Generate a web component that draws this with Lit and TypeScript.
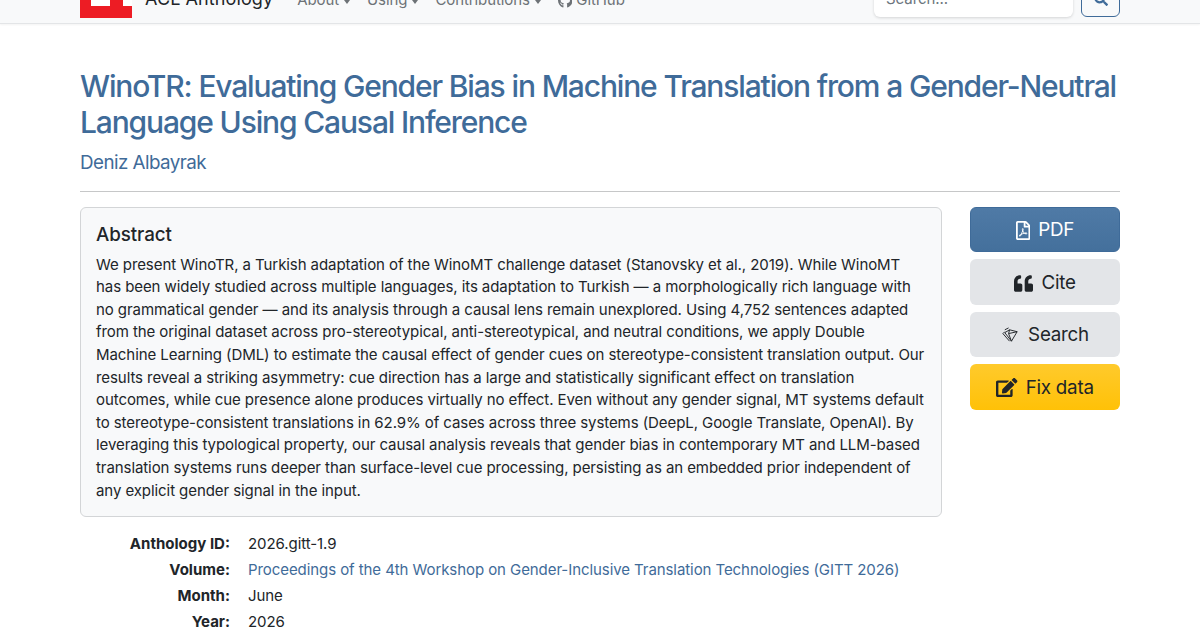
import { LitElement, html, css } from "lit";
import { customElement } from "lit/decorators.js";

const ic = (vb: string, d: string, cls = "") => html`<svg class="ic ${cls}" viewBox="${vb}" fill="currentColor"><path d="${d}"></path></svg>`;
const caret = html`<span class="caret"></span>`;
const GH = "M165.9 397.4c0 2-2.3 3.6-5.2 3.6-3.3.3-5.6-1.3-5.6-3.6 0-2 2.3-3.6 5.2-3.6 3-.3 5.6 1.3 5.6 3.6zm-31.1-4.5c-.7 2 1.3 4.3 4.3 4.9 2.6 1 5.6 0 6.2-2s-1.3-4.3-4.3-5.2c-2.6-.7-5.5.3-6.2 2.3zm44.2-1.7c-2.9.7-4.9 2.6-4.6 4.9.3 2 2.9 3.3 5.9 2.6 2.9-.7 4.9-2.6 4.6-4.6-.3-1.9-3-3.2-5.9-2.9zM244.8 8C106.1 8 0 113.3 0 252c0 110.9 69.8 205.8 169.5 239.2 12.8 2.3 17.3-5.6 17.3-12.1 0-6.2-.3-40.4-.3-61.4 0 0-70 15-84.7-29.8 0 0-11.4-29.1-27.8-36.6 0 0-22.9-15.7 1.6-15.4 0 0 24.9 2 38.6 25.8 21.9 38.6 58.6 27.5 72.9 20.9 2.3-16 8.8-27.1 16-33.7-55.9-6.2-112.3-14.3-112.3-110.5 0-27.5 7.6-41.3 23.6-58.9-2.6-6.5-11.1-33.3 2.6-67.9 20.9-6.5 69 27 69 27 20-5.6 41.5-8.5 62.8-8.5s42.8 2.9 62.8 8.5c0 0 48.1-33.6 69-27 13.7 34.7 5.2 61.4 2.6 67.9 16 17.7 25.8 31.5 25.8 58.9 0 96.5-58.9 104.2-114.8 110.5 9.2 7.9 17 22.9 17 46.4 0 33.7-.3 75.4-.3 83.6 0 6.5 4.6 14.4 17.3 12.1C428.2 457.8 496 362.9 496 252 496 113.3 383.5 8 244.8 8z";
const SEARCH = "M505 442.7L405.3 343c-4.5-4.5-10.6-7-17-7H372c27.6-35.3 44-79.7 44-128C416 93.1 322.9 0 208 0S0 93.1 0 208s93.1 208 208 208c48.3 0 92.7-16.4 128-44v16.3c0 6.4 2.5 12.5 7 17l99.7 99.7c9.4 9.4 24.6 9.4 33.9 0l28.3-28.3c9.4-9.4 9.4-24.6.1-34zM208 336c-70.7 0-128-57.2-128-128 0-70.7 57.2-128 128-128 70.7 0 128 57.2 128 128 0 70.7-57.2 128-128 128z";
const QUOTE = "M464 256h-80v-64c0-35.3 28.7-64 64-64h8c13.3 0 24-10.7 24-24V56c0-13.3-10.7-24-24-24h-8c-88.4 0-160 71.6-160 160v240c0 26.5 21.5 48 48 48h128c26.5 0 48-21.5 48-48V304c0-26.5-21.5-48-48-48zm-288 0H96v-64c0-35.3 28.7-64 64-64h8c13.3 0 24-10.7 24-24V56c0-13.3-10.7-24-24-24h-8C71.6 32 0 103.6 0 192v240c0 26.5 21.5 48 48 48h128c26.5 0 48-21.5 48-48V304c0-26.5-21.5-48-48-48z";
const EDIT = "M402.6 83.2l90.2 90.2c3.8 3.8 3.8 10 0 13.8L274.4 405.6l-92.8 10.3c-12.4 1.4-22.9-9.1-21.5-21.5l10.3-92.8L388.8 83.2c3.8-3.8 10-3.8 13.8 0zm162-22.9l-48.8-48.8c-15.2-15.2-39.9-15.2-55.2 0l-35.4 35.4c-3.8 3.8-3.8 10 0 13.8l90.2 90.2c3.8 3.8 10 3.8 13.8 0l35.4-35.4c15.2-15.3 15.2-40 0-55.2zM384 346.2V448H64V128h229.8c3.2 0 6.2-1.3 8.5-3.5l40-40c7.6-7.6 2.2-20.5-8.5-20.5H48C21.5 64 0 85.5 0 112v352c0 26.5 21.5 48 48 48h352c26.5 0 48-21.5 48-48V306.2c0-10.7-12.9-16-20.5-8.5l-40 40c-2.2 2.3-3.5 5.3-3.5 8.5z";
const PDF = "M369.9 97.9L286 14C277 5 264.8-.1 252.1-.1H48C21.5 0 0 21.5 0 48v416c0 26.5 21.5 48 48 48h288c26.5 0 48-21.5 48-48V131.9c0-12.7-5.1-25-14.1-34zM332.1 128H256V51.9l76.1 76.1zM48 464V48h160v104c0 13.3 10.7 24 24 24h104v288H48zm250.2-143.7c-12.2-12-47-8.7-64.4-6.5-17.2-10.5-28.7-25-36.8-46.3 3.9-16.1 10.1-40.6 5.4-56-4.2-26.2-37.8-23.6-42.6-5.9-4.4 16.1-.4 38.5 7 67.1-10 23.9-24.9 56-35.4 74.4-20 10.3-47 26.2-51 46.2-3.3 15.8 26 55.2 76.1-31.2 22.4-7.4 46.8-16.5 68.4-20.1 18.9 10.2 41 17 55.8 17 25.5 0 28-28.2 17.5-38.7zm-198.1 77.8c5.1-13.7 24.5-29.5 30.4-35-19 30.3-30.4 35.7-30.4 35zm81.6-190.6c7.4 0 6.7 32.1 1.8 40.8-4.4-13.9-4.3-40.8-1.8-40.8zm-24.4 136.6c9.7-16.9 18-37 24.7-54.7 8.3 15.1 18.9 27.2 30.1 35.5-20.8 4.3-38.9 13.1-54.8 19.2zm131.6-5s-5 6-37.3-7.8c35.1-2.6 40.9 5.4 37.3 7.8z";

@customElement("app-root")
export class AppRoot extends LitElement {
  static styles = css`
    :host { display: block; width: 1200px; height: 630px; overflow: hidden; background: #fff; color: #212529; font-family: Inter, "Liberation Sans", sans-serif; font-size: 15.04px; line-height: 1.5; letter-spacing: -0.09px; }
    * { box-sizing: border-box; }
    a { color: #3f6b99; text-decoration: none; }
    .ic { height: 1em; width: auto; display: inline-block; vertical-align: -0.125em; flex: none; }
    nav { height: 24px; background: #f8f9fa; border-bottom: 1px solid #e3e5e7; box-shadow: 0 1px 2px rgba(0,0,0,.05); padding: 0 80px; display: flex; align-items: flex-end; overflow: hidden; }
    .nav-in { flex: 1; display: flex; align-items: flex-end; height: 100%; }
    .logo { width: 52px; height: 18px; background: #ed1c24; flex: none; position: relative; margin-bottom: 5px; }
    .logo i { position: absolute; top: 0; height: 6px; background: #fff; }
    .logo .a { left: 11px; width: 19px; }
    .logo .b { left: 43px; width: 9px; }
    .brand { font-size: 18px; color: #212529; margin-left: 13px; line-height: 24px; transform: translateY(-12px); white-space: nowrap; letter-spacing: 0.1px; }
    .links { display: flex; gap: 17px; margin-left: 24px; transform: translateY(-11px); color: #6d7276; font-size: 15px; white-space: nowrap; line-height: 24px; }
    .links span { display: inline-flex; align-items: center; gap: 4px; }
    .caret { display: inline-block; border-top: 4px solid currentColor; border-left: 3.5px solid transparent; border-right: 3.5px solid transparent; width: 0; height: 0; margin: 3px 0 0 1px; }
    .sp { flex: 1; }
    .input { width: 199px; height: 34px; background: #fff; border-radius: 6px; box-shadow: 0 1px 3px rgba(0,0,0,.15); margin-bottom: 6px; padding: 0 12px; font-size: 15px; color: #6c757d; display: flex; align-items: flex-start; line-height: 22px; margin-right: 8px; flex: none; align-self: flex-end; padding-top: 5px; }
    .sbtn { width: 39px; height: 34px; border: 1px solid #3f6b99; border-radius: 6px; margin-bottom: 6px; color: #3f6b99; display: flex; align-items: flex-end; justify-content: center; padding-bottom: 10px; font-size: 14px; flex: none; }
    main { padding: 44px 80px 0; }
    h1 { margin: 0; font-size: 30px; font-weight: 500; line-height: 36px; color: #3f6b99; letter-spacing: -1.15px; }
    .author { font-size: 18.8px; line-height: 28px; margin-top: 9px; display: block; letter-spacing: -0.55px; }
    hr { border: 0; border-top: 1px solid #c6c7c8; margin: 14px 0 15px; }
    .row { display: flex; gap: 28px; align-items: flex-start; }
    .card { width: 862px; height: 310px; background: #f8f9fa; border: 1px solid #d3d5d7; border-radius: 6px; padding: 16px 15px 15px; }
    h2 { margin: 0 0 7px; font-size: 18.8px; font-weight: 500; line-height: 22.6px; }
    .card p { margin: 0; line-height: 22.6px; }
    .btns { width: 150px; display: flex; flex-direction: column; gap: 7px; }
    .btn { height: 45.4px; border-radius: 6px; font-size: 18.8px; display: flex; align-items: center; justify-content: center; gap: 8px; padding-top: 2px; letter-spacing: -0.25px; }
    .btn .ic { font-size: 19px; }
    .pdf { background: linear-gradient(#4f7aa6, #44709c); color: #fff; border: 1px solid #3f6b99; padding-top: 1px; }
    .gray { background: #e3e5e8; color: #212529; }
    .yellow { background: linear-gradient(#ffca2c, #ffc107); color: #212529; }
    dl { margin: 16px 0 0; display: grid; grid-template-columns: 150px 1fr; column-gap: 18px; row-gap: 3.4px; }
    dt { font-weight: 700; text-align: right; letter-spacing: 0; }
    dd { margin: 0; }
  `;

  render() {
    return html`
      <nav><div class="nav-in">
        <div class="logo"><i class="a"></i><i class="b"></i></div>
        <div class="brand">ACL Anthology</div>
        <div class="links">
          <span>About ${caret}</span><span>Using ${caret}</span><span>Contributions ${caret}</span>
          <span>${ic("0 0 496 512", GH)} GitHub</span>
        </div>
        <div class="sp"></div>
        <div class="input">Search...</div>
        <div class="sbtn">${ic("0 0 512 512", SEARCH)}</div>
      </div></nav>
      <main>
        <h1>WinoTR: Evaluating Gender Bias in Machine Translation from a Gender-Neutral Language Using Causal Inference</h1>
        <a class="author" href="#">Deniz Albayrak</a>
        <hr />
        <div class="row">
          <section class="card">
            <h2>Abstract</h2>
            <p>We present WinoTR, a Turkish adaptation of the WinoMT challenge dataset (Stanovsky et al., 2019). While WinoMT has been widely studied across multiple languages, its adaptation to Turkish — a morphologically rich language with no grammatical gender — and its analysis through a causal lens remain unexplored. Using 4,752 sentences adapted from the original dataset across pro-stereotypical, anti-stereotypical, and neutral conditions, we apply Double Machine Learning (DML) to estimate the causal effect of gender cues on stereotype-consistent translation output. Our results reveal a striking asymmetry: cue direction has a large and statistically significant effect on translation outcomes, while cue presence alone produces virtually no effect. Even without any gender signal, MT systems default to stereotype-consistent translations in 62.9% of cases across three systems (DeepL, Google Translate, OpenAI). By leveraging this typological property, our causal analysis reveals that gender bias in contemporary MT and LLM-based translation systems runs deeper than surface-level cue processing, persisting as an embedded prior independent of any explicit gender signal in the input.</p>
          </section>
          <div class="btns">
            <div class="btn pdf">${ic("0 0 384 512", PDF)} PDF</div>
            <div class="btn gray">${ic("0 0 512 512", QUOTE)} Cite</div>
            <div class="btn gray">
              <svg class="ic gem" viewBox="0 0 20 20" fill="none" stroke="currentColor" stroke-width="1"><path d="M4 7 9 4l8 2-6 10z"></path><path d="M9 4 8 8l9-2M8 8l3 8M2 8l7 8M2 8l2-2M4 4l4-2"></path></svg>
              Search</div>
            <div class="btn yellow">${ic("0 0 576 512", EDIT)} Fix data</div>
          </div>
        </div>
        <dl>
          <dt>Anthology ID:</dt><dd>2026.gitt-1.9</dd>
          <dt>Volume:</dt><dd><a href="#">Proceedings of the 4th Workshop on Gender-Inclusive Translation Technologies (GITT 2026)</a></dd>
          <dt>Month:</dt><dd>June</dd>
          <dt>Year:</dt><dd>2026</dd>
        </dl>
      </main>
    `;
  }
}
